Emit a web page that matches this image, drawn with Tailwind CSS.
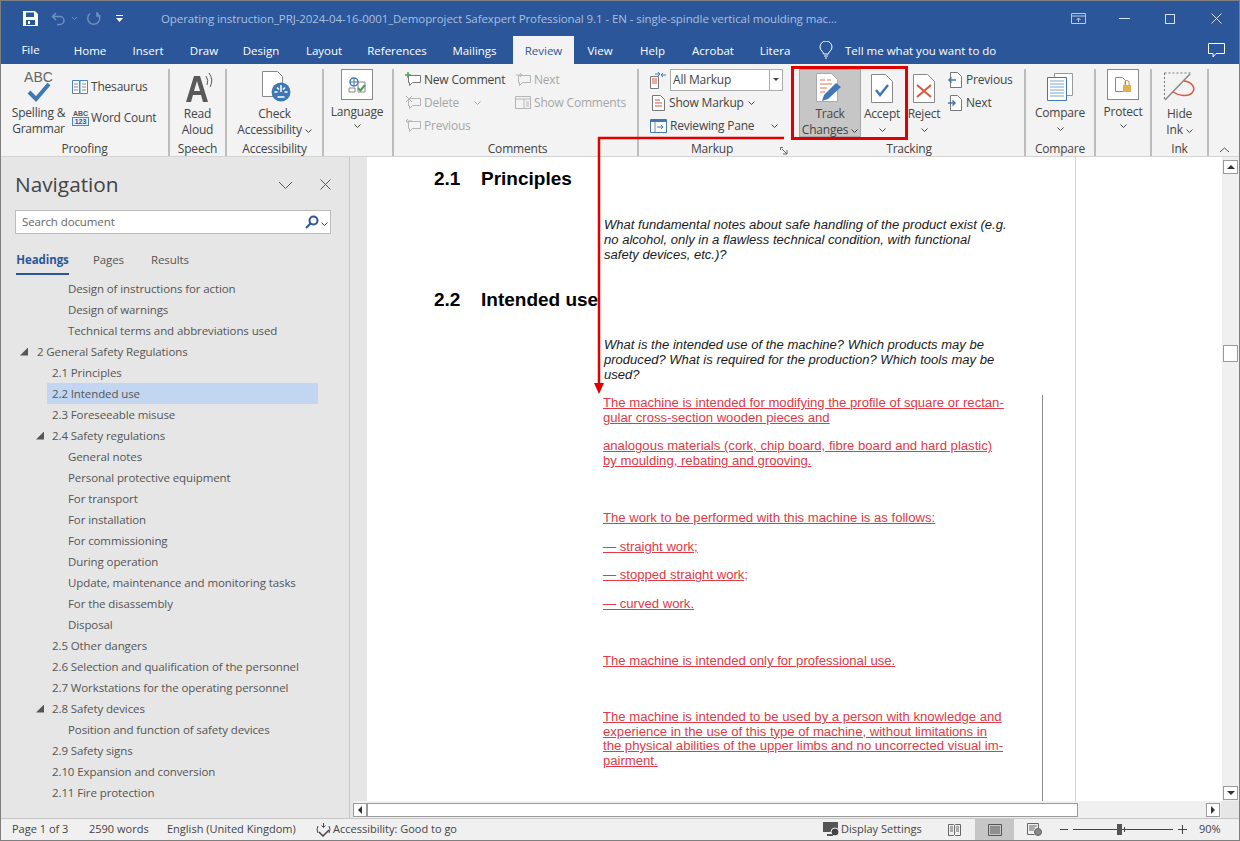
<!DOCTYPE html>
<html lang="en">
<head>
  <meta charset="UTF-8" />
  <title>Operating instruction - Word</title>
  <script src="https://cdn.jsdelivr.net/npm/@tailwindcss/browser@4"></script>
</head>
<body class="bg-white">
<div class="relative w-[1240px] h-[841px] flex flex-col overflow-hidden border border-[#7f7f7f] font-['Open_Sans',sans-serif] text-[12px] text-[#444]">

  <!-- Title bar -->
  <header class="h-[35px] bg-[#2b579a] flex items-center text-white shrink-0">
    <svg class="ml-[22px] w-[15px] h-[15px]" viewBox="0 0 15 15"><path d="M0 0h12l3 3v12H0z" fill="#fff"/><path d="M3 1.500h8v4.500H3z" fill="#2b579a"/><path d="M3 9h9v5H3z" fill="#2b579a"/><path d="M5 10h2v3H5z" fill="#fff"/></svg>
    <svg class="ml-[13px] w-[16px] h-[14px]" viewBox="0 0 16 14" fill="none" stroke="#6f8fc0" stroke-width="1.500"><path d="M5 1 1.500 4.500 5 8M2 4.500h7a4 4 0 0 1 0 8H6"/></svg>
    <svg class="ml-[4px] w-[7px] h-[5px]" viewBox="0 0 7 5" fill="none" stroke="#6f8fc0"><path d="m1 1 2.500 2.500L6 1"/></svg>
    <svg class="ml-[8px] w-[15px] h-[15px]" viewBox="0 0 15 15" fill="none" stroke="#6f8fc0" stroke-width="1.500"><path d="M4 2.500a6 6 0 1 0 7-.3M11 1v4h3.500"/></svg>
    <svg class="ml-[15px] w-[7px] h-[8px]" viewBox="0 0 7 8"><path d="M0 0h7v1H0zM0 3h7L3.500 7z" fill="#fff"/></svg>
    <div class="ml-[38px] w-[895px] whitespace-nowrap text-[11.5px] tracking-[-0.08px] text-[#a9bfe0]">Operating instruction_PRJ-2024-04-16-0001_Demoproject Safexpert Professional 9.1 - EN - single-spindle vertical moulding mac...</div>
    <svg class="ml-[15px] w-[15px] h-[11px]" viewBox="0 0 15 11" fill="none" stroke="#b9cbe6"><path d="M.5.500h14v10H.5zM.5 3h14M7.500 9V5M5.500 7l2-2 2 2"/></svg>
    <div class="ml-[33px] w-[11px] h-px bg-[#d5e0f0]"></div>
    <div class="ml-[35px] w-[10px] h-[10px] border border-[#d5e0f0]"></div>
    <svg class="ml-[36px] w-[11px] h-[11px]" viewBox="0 0 11 11" fill="none" stroke="#d5e0f0"><path d="m.5.500 10 10M10.500.500l-10 10"/></svg>
  </header>

  <!-- Tabs -->
  <nav class="h-[28px] bg-[#2b579a] flex text-white shrink-0 text-[11.5px]">
    <div class="w-[59px] flex items-center justify-center pb-px">File</div>
    <div class="w-[60px] flex items-center justify-center pt-px">Home</div>
    <div class="w-[56px] flex items-center justify-center pt-px">Insert</div>
    <div class="w-[56px] flex items-center justify-center pt-px">Draw</div>
    <div class="w-[58px] flex items-center justify-center pt-px">Design</div>
    <div class="w-[68px] flex items-center justify-center pt-px">Layout</div>
    <div class="w-[78px] flex items-center justify-center pt-px">References</div>
    <div class="w-[77px] flex items-center justify-center pt-px">Mailings</div>
    <div class="w-[61px] flex items-center justify-center pt-px bg-[#f3f3f3] text-[#2b579a]">Review</div>
    <div class="w-[52px] flex items-center justify-center pt-px">View</div>
    <div class="w-[53px] flex items-center justify-center pt-px">Help</div>
    <div class="w-[68px] flex items-center justify-center pt-px">Acrobat</div>
    <div class="w-[56px] flex items-center justify-center pt-px">Litera</div>
    <div class="w-[16px]"></div>
    <svg class="w-[14px] h-[18px] self-center" viewBox="0 0 14 18" fill="none" stroke="#fff"><path d="M4.500 13c0-2.500-3.500-3.500-3.500-7a6 6 0 0 1 12 0c0 3.500-3.500 4.500-3.500 7zM5 15h4M6 17h2"/></svg>
    <div class="ml-[12px] w-[363px] flex items-center pt-px">Tell me what you want to do</div>
    <svg class="w-[17px] h-[15px] self-center" viewBox="0 0 17 15" fill="none" stroke="#fff"><path d="M.5.500h16v10H8l-3 3.500v-3.500H.5z"/></svg>
  </nav>

  <!-- Ribbon -->
  <section class="h-[93px] bg-[#f3f3f3] flex pt-[5px] border-b border-[#d4d4d4] shrink-0 text-[12px] tracking-[-0.2px] leading-[16px] text-[#444]">

    <!-- Proofing -->
    <div class="w-[169px] flex flex-col border-r-2 border-[#bdbdbd]">
      <div class="h-[73px] shrink-0 flex">
        <div class="w-[71px] pl-[4px] flex flex-col items-center whitespace-nowrap">
          <div class="font-['Liberation_Sans',sans-serif] text-[14px] tracking-normal leading-[12px] mt-[2px] text-[#666]">ABC</div>
          <svg class="w-[24px] h-[20px] shrink-0 mt-[-1px]" viewBox="0 0 24 20" fill="none" stroke="#3f78b5" stroke-width="4"><path d="m2 10 7 7L22 2"/></svg>
          <div class="text-center mt-[3px]">Spelling &amp;<br/>Grammar</div>
        </div>
        <div class="flex flex-col pt-[10px] gap-[15px]">
          <div class="flex items-center gap-[3px] h-[16px]">
            <svg class="w-[16px] h-[14px] shrink-0" viewBox="0 0 16 14" fill="#fff" stroke="#4a86c5"><path d="M.5.500h7v13h-7zM8 .500h7.500v13H8z"/><path d="M2 4h4M2 7h4M2 10h4M10 4h4M10 7h4M10 10h4" stroke="#888"/></svg>
            <span>Thesaurus</span>
          </div>
          <div class="flex items-center gap-[2px] h-[16px]">
            <div class="w-[17px] flex flex-col items-center font-['Liberation_Sans',sans-serif] text-[7px] tracking-normal leading-[7px] font-bold text-[#555]"><span>ABC</span><span class="w-full text-center border border-[#4a86c5] bg-[#e4eef8] text-[#2b579a]">123</span></div>
            <span>Word Count</span>
          </div>
        </div>
      </div>
      <div class="h-[14px] leading-[14px] text-center">Proofing</div>
    </div>

    <!-- Speech -->
    <div class="w-[57px] flex flex-col border-r-2 border-[#bdbdbd]">
      <div class="h-[73px] shrink-0 flex flex-col items-center">
        <svg class="w-[30px] h-[31px] shrink-0 mt-[2px]" viewBox="0 0 30 31"><path d="M3 31 11 5h6l8 26h-5l-2-7H10l-2 7zM11 20h6l-3-10z" fill="#595959"/><path d="M23 5q3 4 1 9M26 2q5 7 1 14" fill="none" stroke="#595959"/></svg>
        <div class="text-center mt-[4px]">Read<br/>Aloud</div>
      </div>
      <div class="h-[14px] leading-[14px] text-center">Speech</div>
    </div>

    <!-- Accessibility -->
    <div class="w-[97px] flex flex-col border-r-2 border-[#bdbdbd]">
      <div class="h-[73px] shrink-0 flex flex-col items-center whitespace-nowrap">
        <svg class="w-[30px] h-[31px] shrink-0 mt-[2px] ml-[2px]" viewBox="0 0 30 31"><path d="M1.500.500h15l5 5v20h-20z" fill="#fff" stroke="#888"/><circle cx="20" cy="21" r="9.500" fill="#3f78b5"/><path d="M20 14v7M13.500 21h3M23.500 21h3M16 16.500l2 2M24 16.500l-2 2M16.500 26l7 0" stroke="#fff" stroke-width="1.500"/></svg>
        <div class="text-center mt-[4px]">Check<br/>Accessibility <svg class="inline w-[7px] h-[4px] align-middle" viewBox="0 0 7 4" fill="none" stroke="#444"><path d="m.5.500 3 3 3-3"/></svg></div>
      </div>
      <div class="h-[14px] leading-[14px] text-center">Accessibility</div>
    </div>

    <!-- Language -->
    <div class="w-[70px] flex flex-col border-r-2 border-[#bdbdbd]">
      <div class="h-[73px] shrink-0 flex flex-col items-center pr-[2px]">
        <div class="w-[32px] h-[31px] bg-white border border-[#8a8a8a] flex items-center justify-center">
          <svg class="w-[18px] h-[16px]" viewBox="0 0 18 16" fill="none"><circle cx="6" cy="5" r="4" stroke="#3f78b5" stroke-width="1.500"/><path d="M2 5h8M6 1v8" stroke="#3f78b5"/><path d="M1 11h6v4H1zM10 5h7v10h-7z" stroke="#888"/><path d="m10 11 2.500 2.500L17 8" stroke="#4a9e5c" stroke-width="2"/></svg>
        </div>
        <div class="mt-[4px] leading-[15px]">Language</div>
        <svg class="w-[7px] h-[4px] mt-[5px]" viewBox="0 0 7 4" fill="none" stroke="#444"><path d="m.5.500 3 3 3-3"/></svg>
      </div>
    </div>

    <!-- Comments -->
    <div class="w-[245px] flex flex-col border-r-2 border-[#bdbdbd]">
      <div class="h-[73px] shrink-0 flex pl-[11px] -mt-px">
        <div class="flex flex-col w-[110px]">
          <div class="flex items-center gap-[3px] h-[23px]">
            <svg class="w-[16px] h-[15px] shrink-0" viewBox="0 0 16 15" fill="none"><path d="M3.500 3.500h12v7h-8l-3 3v-3h-1z" fill="#fff" stroke="#777"/><path d="M3 0v6M0 3h6" stroke="#4a9e5c" stroke-width="1.500"/></svg>
            <span>New Comment</span>
          </div>
          <div class="flex items-center gap-[3px] h-[23px] text-[#a6a6a6]">
            <svg class="w-[16px] h-[15px] shrink-0" viewBox="0 0 16 15" fill="none" stroke="#b5b5b5"><path d="M3.500 3.500h12v7h-8l-3 3v-3h-1z"/><path d="m1 1 6 6M7 1 1 7"/></svg>
            <span>Delete</span>
            <svg class="ml-[12px] w-[7px] h-[4px]" viewBox="0 0 7 4" fill="none" stroke="#a6a6a6"><path d="m.5.500 3 3 3-3"/></svg>
          </div>
          <div class="flex items-center gap-[3px] h-[23px] text-[#a6a6a6]">
            <svg class="w-[16px] h-[15px] shrink-0" viewBox="0 0 16 15" fill="none" stroke="#b5b5b5"><path d="M3.500 3.500h12v7h-8l-3 3v-3h-1z"/><path d="M7 3H1M3 1 1 3l2 2"/></svg>
            <span>Previous</span>
          </div>
        </div>
        <div class="flex flex-col">
          <div class="flex items-center gap-[3px] h-[23px] text-[#a6a6a6]">
            <svg class="w-[16px] h-[15px] shrink-0" viewBox="0 0 16 15" fill="none" stroke="#b5b5b5"><path d="M3.500 3.500h12v7h-8l-3 3v-3h-1z"/><path d="M1 3h6M5 1l2 2-2 2"/></svg>
            <span>Next</span>
          </div>
          <div class="flex items-center gap-[3px] h-[23px] text-[#a6a6a6]">
            <svg class="w-[16px] h-[15px] shrink-0" viewBox="0 0 16 15" fill="none" stroke="#b5b5b5"><path d="M.5 1.500h15v12H.5zM.5 4h15M9 4v9.500M11 7h3M11 9h3M11 11h3"/></svg>
            <span>Show Comments</span>
          </div>
        </div>
      </div>
      <div class="h-[14px] leading-[14px] mt-px text-center pl-[4px]">Comments</div>
    </div>

    <!-- Markup -->
    <div class="w-[151px] flex flex-col relative">
      <div class="h-[73px] shrink-0 flex flex-col pl-[11px] -mt-px">
        <div class="flex items-center gap-[3px] h-[23px]">
          <svg class="w-[17px] h-[18px] shrink-0" viewBox="0 0 17 18" fill="none"><path d="M.5 5.500h8v12h-8z" fill="#fff" stroke="#777"/><path d="M2 8h5M2 10h5M2 12h5" stroke="#d9573f"/><path d="M5 3h5M8 1l2 2-2 2M16 4h-5M13 6l-2-2 2-2" stroke="#3f78b5"/></svg>
          <div class="w-[113px] h-[22px] bg-white border border-[#ababab] flex items-center pl-[2px] justify-between">All Markup<div class="w-[13px] h-full border-l border-[#ababab] flex items-center justify-center"><div class="border-x-[3px] border-x-transparent border-t-[3px] border-t-[#444]"></div></div></div>
        </div>
        <div class="flex items-center gap-[4px] h-[23px] pl-[2px]">
          <svg class="w-[13px] h-[16px] shrink-0" viewBox="0 0 13 16" fill="#fff"><path d="M.5.500h8l4 4v11H.5z" stroke="#777"/><path d="M3 5h5M3 8h7M3 11h7" stroke="#d9573f"/></svg>
          <span>Show Markup</span>
          <svg class="w-[7px] h-[4px]" viewBox="0 0 7 4" fill="none" stroke="#444"><path d="m.5.500 3 3 3-3"/></svg>
        </div>
        <div class="flex items-center gap-[3px] h-[23px]">
          <svg class="w-[17px] h-[14px] shrink-0" viewBox="0 0 17 14" fill="#fff"><path d="M.5.500h16v13H.5z" stroke="#3f78b5"/><path d="M1 1h15v2H1z" fill="#3f78b5"/><path d="M5 3v10" stroke="#888"/><path d="M7 8h6M11 6l2 2-2 2" stroke="#3f78b5" fill="none"/></svg>
          <span>Reviewing Pane</span>
          <svg class="ml-[14px] w-[7px] h-[4px]" viewBox="0 0 7 4" fill="none" stroke="#444"><path d="m.5.500 3 3 3-3"/></svg>
        </div>
      </div>
      <div class="h-[14px] leading-[14px] mt-px text-center pr-[5px]">Markup</div>
      <svg class="absolute right-[2px] bottom-[1px] w-[8px] h-[8px]" viewBox="0 0 8 8" fill="none" stroke="#666"><path d="M.5 3V.500H3M2 2l5 5M7 3v4H3"/></svg>
    </div>

    <!-- Tracking -->
    <div class="w-[236px] flex flex-col border-r-2 border-[#bdbdbd]">
      <div class="h-[73px] shrink-0 flex pl-[9px]">
        <div class="w-[62px] h-[68px] shrink-0 bg-[#c6c6c6] border border-[#a8a8a8] flex flex-col items-center whitespace-nowrap">
          <svg class="w-[28px] h-[31px] shrink-0 mt-[3px]" viewBox="0 0 28 31"><path d="M.5.500h15l6 6v22H.5z" fill="#fff" stroke="#aaa"/><path d="M4 7h5M11 7h4M4 11h12M4 15h7M4 19h5" stroke="#e0745a"/><path d="m6 28 2-6 12-12 5 4-13 12z" fill="#3f78b5"/></svg>
          <div class="text-center mt-[2px]">Track<br/>Changes <svg class="inline w-[7px] h-[4px] align-middle" viewBox="0 0 7 4" fill="none" stroke="#444"><path d="m.5.500 3 3 3-3"/></svg></div>
        </div>
        <div class="w-[42px] shrink-0 flex flex-col items-center">
          <svg class="w-[22px] h-[29px] shrink-0 mt-[5px]" viewBox="0 0 22 29" fill="#fff"><path d="M.5.500h14l7 7v21H.5z" stroke="#888"/><path d="m5 16 4 5 8-10" fill="none" stroke="#3f78b5" stroke-width="2.500"/></svg>
          <div class="mt-[3px]">Accept</div>
          <svg class="w-[7px] h-[4px] mt-[6px]" viewBox="0 0 7 4" fill="none" stroke="#444"><path d="m.5.500 3 3 3-3"/></svg>
        </div>
        <div class="w-[42px] shrink-0 flex flex-col items-center">
          <svg class="w-[22px] h-[29px] shrink-0 mt-[5px]" viewBox="0 0 22 29" fill="#fff"><path d="M.5.500h14l7 7v21H.5z" stroke="#888"/><path d="m4 11 14 12M18 11 4 23" fill="none" stroke="#d9573f" stroke-width="2"/></svg>
          <div class="mt-[3px]">Reject</div>
          <svg class="w-[7px] h-[4px] mt-[6px]" viewBox="0 0 7 4" fill="none" stroke="#444"><path d="m.5.500 3 3 3-3"/></svg>
        </div>
        <div class="flex flex-col pl-[3px] -mt-px">
          <div class="flex items-center gap-[4px] h-[23px]">
            <svg class="w-[14px] h-[16px] shrink-0" viewBox="0 0 14 16" fill="#fff"><path d="M2.500.500h7l4 4v11h-11z" stroke="#777"/><path d="M8 8H1M3.500 5.500 1 8l2.500 2.500" fill="none" stroke="#3f78b5" stroke-width="1.500"/></svg>
            <span>Previous</span>
          </div>
          <div class="flex items-center gap-[4px] h-[23px]">
            <svg class="w-[14px] h-[16px] shrink-0" viewBox="0 0 14 16" fill="#fff"><path d="M2.500.500h7l4 4v11h-11z" stroke="#777"/><path d="M0 8h7M4.500 5.500 7 8l-2.500 2.500" fill="none" stroke="#3f78b5" stroke-width="1.500"/></svg>
            <span>Next</span>
          </div>
        </div>
      </div>
      <div class="h-[14px] leading-[14px] text-center pl-[4px]">Tracking</div>
    </div>

    <!-- Compare -->
    <div class="w-[70px] flex flex-col border-r-2 border-[#bdbdbd]">
      <div class="h-[73px] shrink-0 flex flex-col items-center pt-[4px]">
        <svg class="w-[26px] h-[28px] shrink-0" viewBox="0 0 26 28"><path d="M7.500.500h18v22h-18z" fill="#fff" stroke="#999"/><path d="M.5 4.500h19v23H.5z" fill="#fff" stroke="#3f78b5"/><path d="M3 8h14M3 11h14M3 14h14M3 17h14M3 20h14M3 23h14" stroke="#7aa6d6"/></svg>
        <div class="mt-[4px]">Compare</div>
        <svg class="w-[7px] h-[4px] mt-[6px]" viewBox="0 0 7 4" fill="none" stroke="#444"><path d="m.5.500 3 3 3-3"/></svg>
      </div>
      <div class="h-[14px] leading-[14px] text-center">Compare</div>
    </div>

    <!-- Protect -->
    <div class="w-[56px] flex flex-col border-r-2 border-[#bdbdbd]">
      <div class="h-[73px] shrink-0 flex flex-col items-center">
        <div class="w-[32px] h-[31px] bg-white border border-[#8a8a8a] flex items-center justify-center">
          <svg class="w-[17px] h-[16px]" viewBox="0 0 17 16"><path d="M.5.500h7l3 3v11H.5z" fill="#fff" stroke="#888"/><path d="M8 8h8v7H8z" fill="#e0b04a"/><path d="M10 8V5.500a2 2 0 0 1 4 0V8" fill="none" stroke="#c9973a"/></svg>
        </div>
        <div class="mt-[4px] leading-[15px]">Protect</div>
        <svg class="w-[7px] h-[4px] mt-[5px]" viewBox="0 0 7 4" fill="none" stroke="#444"><path d="m.5.500 3 3 3-3"/></svg>
      </div>
    </div>

    <!-- Ink -->
    <div class="w-[57px] flex flex-col border-r-2 border-[#bdbdbd]">
      <div class="h-[73px] shrink-0 flex flex-col items-center pt-[3px] whitespace-nowrap">
        <svg class="w-[32px] h-[29px] shrink-0" viewBox="0 0 32 29" fill="none"><path d="M.5 1h26M.5 1v27" stroke="#777" stroke-dasharray="2 2"/><path d="M1 28 26 2" stroke="#888" stroke-width="1.500"/><path d="M20 9c9 1 12 8 8 12s-13 3-19-1" stroke="#d9573f" stroke-width="1.500"/></svg>
        <div class="text-center mt-[5px]">Hide<br/>Ink <svg class="inline w-[7px] h-[4px] align-middle" viewBox="0 0 7 4" fill="none" stroke="#444"><path d="m.5.500 3 3 3-3"/></svg></div>
      </div>
      <div class="h-[14px] leading-[14px] text-center">Ink</div>
    </div>

    <div class="flex-1 flex items-end justify-center pb-[3px]">
      <svg class="w-[11px] h-[6px]" viewBox="0 0 11 6" fill="none" stroke="#555"><path d="m1 5 4.500-4L10 5"/></svg>
    </div>
  </section>

  <!-- Main area -->
  <main class="flex-1 flex min-h-0">

    <!-- Navigation pane -->
    <aside class="w-[349px] bg-[#e6e6e6] border-r border-[#c6c6c6] flex flex-col shrink-0 text-[11.5px] tracking-[-0.1px] text-[#555]">
      <div class="h-[53px] flex items-center pl-[14px] pt-[2px]">
        <div class="w-[263px] text-[20.8px] tracking-normal text-[#444]">Navigation</div>
        <svg class="w-[15px] h-[8px]" viewBox="0 0 15 8" fill="none" stroke="#555"><path d="m1 1 6.500 6.500L14 1"/></svg>
        <svg class="ml-[27px] w-[11px] h-[11px]" viewBox="0 0 11 11" fill="none" stroke="#555"><path d="m.5.500 10 10M10.500.500l-10 10"/></svg>
      </div>
      <div class="ml-[14px] w-[316px] h-[24px] bg-white border border-[#bcbcbc] flex items-center pl-[6px] text-[#666]">
        <span class="flex-1">Search document</span>
        <svg class="w-[14px] h-[14px]" viewBox="0 0 14 14" fill="none" stroke="#2b579a" stroke-width="2"><circle cx="8.500" cy="5.500" r="4"/><path d="M5.500 8.500 1 13"/></svg>
        <svg class="mx-[2px] w-[7px] h-[4px] mt-[3px]" viewBox="0 0 7 4" fill="none" stroke="#444"><path d="m.5.500 3 3 3-3"/></svg>
      </div>
      <div class="mt-[17px] ml-[15px] flex h-[24px] text-[11.5px]">
        <div class="w-[53px] text-center font-bold text-[#2b579a] border-b-2 border-[#2b579a]">Headings</div>
        <div class="ml-[24px]">Pages</div>
        <div class="ml-[27px]">Results</div>
      </div>
      <div class="mt-[3px] flex flex-col leading-[21px] ml-[46px] w-[271px] whitespace-nowrap">
        <div class="pl-[21px]">Design of instructions for action</div>
        <div class="pl-[21px]">Design of warnings</div>
        <div class="pl-[21px]">Technical terms and abbreviations used</div>
        <div class="flex items-center -ml-[27px]"><span class="w-[8px] h-[8px] mr-[9px] [clip-path:polygon(100%_0,100%_100%,0_100%)] bg-[#555]"></span>2 General Safety Regulations</div>
        <div class="pl-[5px]">2.1 Principles</div>
        <div class="pl-[5px] bg-[#c2d5f1]">2.2 Intended use</div>
        <div class="pl-[5px]">2.3 Foreseeable misuse</div>
        <div class="flex items-center -ml-[11px]"><span class="w-[8px] h-[8px] mr-[8px] [clip-path:polygon(100%_0,100%_100%,0_100%)] bg-[#555]"></span>2.4 Safety regulations</div>
        <div class="pl-[21px]">General notes</div>
        <div class="pl-[21px]">Personal protective equipment</div>
        <div class="pl-[21px]">For transport</div>
        <div class="pl-[21px]">For installation</div>
        <div class="pl-[21px]">For commissioning</div>
        <div class="pl-[21px]">During operation</div>
        <div class="pl-[21px]">Update, maintenance and monitoring tasks</div>
        <div class="pl-[21px]">For the disassembly</div>
        <div class="pl-[21px]">Disposal</div>
        <div class="pl-[5px]">2.5 Other dangers</div>
        <div class="pl-[5px]">2.6 Selection and qualification of the personnel</div>
        <div class="pl-[5px]">2.7 Workstations for the operating personnel</div>
        <div class="flex items-center -ml-[11px]"><span class="w-[8px] h-[8px] mr-[8px] [clip-path:polygon(100%_0,100%_100%,0_100%)] bg-[#555]"></span>2.8 Safety devices</div>
        <div class="pl-[21px]">Position and function of safety devices</div>
        <div class="pl-[5px]">2.9 Safety signs</div>
        <div class="pl-[5px]">2.10 Expansion and conversion</div>
        <div class="pl-[5px]">2.11 Fire protection</div>
      </div>
    </aside>

    <!-- Document + scrollbars -->
    <div class="flex-1 flex flex-col min-w-0">
      <div class="flex-1 flex min-h-0">
        <div class="w-[17px] bg-[#e6e6e6] shrink-0"></div>
        <div class="flex-1 bg-white relative overflow-hidden">
          <div class="w-[709px] h-full border-r border-[#d4d4d4] pl-[67px] pt-[10px] font-['Liberation_Sans',sans-serif] text-[13.06px] leading-[15px] text-[#1a1a1a] whitespace-nowrap">
            <div class="text-[19px] leading-[24px] font-bold text-black flex"><span class="w-[47px]">2.1</span>Principles</div>
            <div class="ml-[170px] mt-[26px] italic">What fundamental notes about safe handling of the product exist (e.g.<br/>no alcohol, only in a flawless technical condition, with functional<br/>safety devices, etc.)?</div>
            <div class="text-[19px] leading-[24px] font-bold text-black flex mt-[26px]"><span class="w-[47px]">2.2</span>Intended use</div>
            <div class="ml-[170px] mt-[25px] italic">What is the intended use of the machine? Which products may be<br/>produced? What is required for the production? Which tools may be<br/>used?</div>
            <div class="ml-[169px] w-[440px] mt-[13px] border-r border-[#8a8a8a] text-[13.12px] text-[#e03a46] underline">
              <div>The machine is intended for modifying the profile of square or rectan-<br/>gular cross-section wooden pieces and</div>
              <div class="mt-[13px]">analogous materials (cork, chip board, fibre board and hard plastic)<br/>by moulding, rebating and grooving.</div>
              <div class="mt-[42px]">The work to be performed with this machine is as follows:</div>
              <div class="mt-[14px]">— straight work;</div>
              <div class="mt-[13px]">— stopped straight work;</div>
              <div class="mt-[14px]">— curved work.</div>
              <div class="mt-[42px]">The machine is intended only for professional use.</div>
              <div class="mt-[42px] leading-[14.500px]">The machine is intended to be used by a person with knowledge and<br/>experience in the use of this type of machine, without limitations in<br/>the physical abilities of the upper limbs and no uncorrected visual im-<br/>pairment.</div>
              <div class="h-[34px]"></div>
            </div>
          </div>
        </div>
        <!-- Vertical scrollbar -->
        <div class="w-[17px] bg-[#f0f0f0] flex flex-col items-center pt-[3px] shrink-0">
          <div class="w-[15px] h-[14px] bg-white border border-[#9a9a9a] flex items-center justify-center"><div class="border-x-[4px] border-x-transparent border-b-[4px] border-b-[#333]"></div></div>
          <div class="mt-[171px] w-[15px] h-[17px] bg-white border border-[#9a9a9a]"></div>
          <div class="flex-1"></div>
          <div class="w-[15px] h-[14px] bg-white border border-[#9a9a9a] flex items-center justify-center mb-[1px]"><div class="border-x-[4px] border-x-transparent border-t-[4px] border-t-[#333]"></div></div>
        </div>
      </div>
      <!-- Horizontal scrollbar -->
      <div class="h-[17px] flex items-center bg-[#f0f0f0] shrink-0">
        <div class="w-[3px] h-full bg-[#e6e6e6]"></div>
        <div class="w-[14px] h-[14px] bg-white border border-[#9a9a9a] flex items-center justify-center"><div class="border-y-[4px] border-y-transparent border-r-[4px] border-r-[#333]"></div></div>
        <div class="w-[711px] h-[14px] bg-white border border-[#9a9a9a]"></div>
        <div class="ml-[128px] w-[14px] h-[14px] bg-white border border-[#9a9a9a] flex items-center justify-center"><div class="border-y-[4px] border-y-transparent border-l-[4px] border-l-[#333]"></div></div>
        <div class="flex-1"></div>
        <div class="w-[18px] h-full bg-[#e6e6e6]"></div>
      </div>
    </div>
  </main>

  <!-- Status bar -->
  <footer class="h-[22px] bg-[#f0f0f0] border-t border-[#c6c6c6] flex items-center shrink-0 text-[11px] text-[#444]">
    <span class="ml-[11px] w-[77px]">Page 1 of 3</span>
    <span class="w-[78px]">2590 words</span>
    <span class="w-[148px]">English (United Kingdom)</span>
    <svg class="w-[17px] h-[14px]" viewBox="0 0 17 14" fill="none" stroke="#444"><path d="M8.500 0v4M6.500 2.500l2 2 2-2M3 3Q1 6 3 10M14 3q2 3 0 7"/><path d="m4 9 4 4 6-6" stroke-width="1.500"/></svg>
    <span class="ml-[1px] w-[490px]">Accessibility: Good to go</span>
    <svg class="w-[17px] h-[15px]" viewBox="0 0 17 15"><path d="M0 0h15v10H0z" fill="#555"/><circle cx="12" cy="10" r="4" fill="#444" stroke="#f0f0f0"/><path d="M4 13h6" stroke="#555" stroke-width="2"/></svg>
    <span class="ml-[1px] w-[107px]">Display Settings</span>
    <svg class="w-[13px] h-[12px]" viewBox="0 0 13 12" fill="none" stroke="#666"><path d="M.5.500h5l1 1 1-1h5v11h-5l-1-1-1 1h-5zM6.500 1.500v9M2 3h3M2 5h3M2 7h3M8 3h3M8 5h3M8 7h3"/></svg>
    <div class="ml-[14px] w-[39px] h-full bg-[#c6c6c6] flex items-center justify-center">
      <svg class="w-[14px] h-[12px]" viewBox="0 0 14 12" fill="none" stroke="#555"><path d="M.5.500h13v11H.5zM2 3h10M2 5h10M2 7h10M2 9h10"/></svg>
    </div>
    <svg class="ml-[13px] w-[15px] h-[13px]" viewBox="0 0 15 13" fill="none" stroke="#666"><path d="M.5.500h11v8M.5.500v11h7M2 3h8M2 5h6M2 7h5"/><circle cx="11" cy="9" r="3.500" fill="#888"/></svg>
    <div class="ml-[18px] w-[8px] h-px bg-[#444]"></div>
    <div class="ml-[5px] w-[100px] h-px bg-[#444] relative">
      <div class="absolute left-[44px] -top-[5px] w-[5px] h-[11px] bg-[#555]"></div>
      <div class="absolute left-[51px] -top-[2px] w-px h-[5px] bg-[#444]"></div>
    </div>
    <svg class="ml-[5px] w-[9px] h-[9px]" viewBox="0 0 9 9" stroke="#444"><path d="M0 4.500h9M4.500 0v9"/></svg>
    <span class="ml-[12px]">90%</span>
  </footer>

  <!-- Red annotation drawn over the screenshot -->
  <div class="absolute left-[790px] top-[65px] w-[117px] h-[74px] border-[3px] border-[#e00000]"></div>
  <svg class="absolute left-0 top-0 w-[1240px] h-[841px] pointer-events-none" viewBox="0 0 1240 841" fill="none"><path d="M783 137H598V386" stroke="#e00000" stroke-width="2.500"/><path d="M593 382h10l-5 11z" fill="#e00000"/></svg>
</div>
</body>
</html>
